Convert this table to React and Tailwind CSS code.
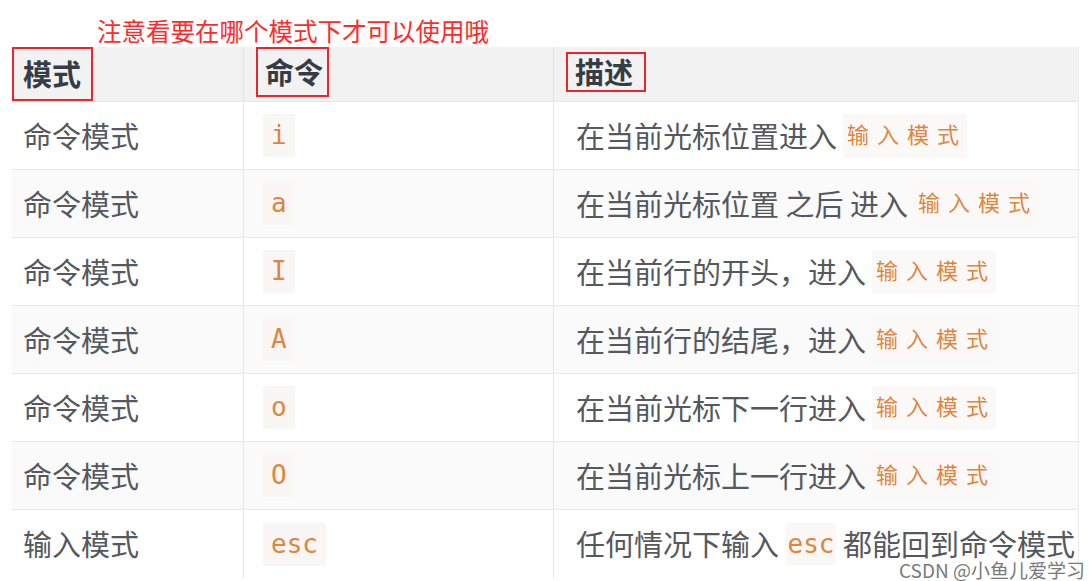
const rows = [
  { mode: "命令模式", cmd: "i", desc: [["t", "在当前光标位置进入"], ["c", "输入模式"]] },
  { mode: "命令模式", cmd: "a", desc: [["t", "在当前光标位置 之后 进入"], ["c", "输入模式"]] },
  { mode: "命令模式", cmd: "I", desc: [["t", "在当前行的开头，进入"], ["c", "输入模式"]] },
  { mode: "命令模式", cmd: "A", desc: [["t", "在当前行的结尾，进入"], ["c", "输入模式"]] },
  { mode: "命令模式", cmd: "o", desc: [["t", "在当前光标下一行进入"], ["c", "输入模式"]] },
  { mode: "命令模式", cmd: "O", desc: [["t", "在当前光标上一行进入"], ["c", "输入模式"]] },
  { mode: "输入模式", cmd: "esc", desc: [["t", "任何情况下输入 "], ["e", "esc"], ["t", " 都能回到命令模式"]] },
];

const cjk = "font-['Noto_Sans_CJK_SC',sans-serif]";
const mono = "font-['DejaVu_Sans_Mono','Noto_Sans_CJK_SC',monospace]";

const Desc = ({ parts }) => (
  <span className="flex items-center whitespace-pre">
    {parts.map(([kind, text], i) => {
      if (kind === "t") return <span key={i}>{text}</span>;
      if (kind === "e")
        return (
          <span key={i} className={`${mono} text-[26px] text-[#e0853f] bg-[#faf8f7] px-[2px] leading-[42px]`}>
            {text}
          </span>
        );
      return (
        <span
          key={i}
          className={`${mono} ml-[6px] text-[22px] tracking-[8px] text-[#e0853f] bg-[#faf9f8] pl-[4px] leading-[44px]`}
        >
          {text}
        </span>
      );
    })}
  </span>
);

export default function App() {
  return (
    <div className={`relative w-[1091px] h-[581px] bg-white overflow-hidden ${cjk}`}>
      <div className="h-[47px] pl-[97px] pt-[17px] text-[24.5px] leading-[28px] text-[#ff2a2a]">
        注意看要在哪个模式下才可以使用哦
      </div>

      <div className="ml-[12px] w-[1067px] border-r border-[#ececec]">
        <div className="grid grid-cols-[231px_310px_526px] h-[55px] bg-[#f2f2f2] border-b border-[#e6e6e6] text-[29px] font-bold text-[#353c46]">
          <div className="flex items-start">
            <span className="flex items-center h-[54px] w-[81px] pl-[9px] border-2 border-[#e8262b]">模式</span>
          </div>
          <div className="flex items-start pl-[12px] border-l border-[#e2e2e2]">
            <span className="flex items-center h-[50px] w-[73px] pl-[7px] border-2 border-[#e8262b]">命令</span>
          </div>
          <div className="flex items-start pt-[5px] pl-[12px] border-l border-[#e2e2e2]">
            <span className="flex items-center h-[40px] w-[80px] pl-[7px] border-2 border-[#e8262b]">描述</span>
          </div>
        </div>

        {rows.map((r, i) => (
          <div
            key={i}
            className={`grid grid-cols-[231px_310px_526px] h-[68px] text-[29px] text-[#55585d] ${
              i % 2 === 1 ? "bg-[#fafafa]" : "bg-white"
            } ${i < rows.length - 1 ? "border-b border-[#e8e8e8]" : ""}`}
          >
            <div className="flex items-center pl-[11px]">{r.mode}</div>
            <div className="flex items-center pl-[19px] border-l border-[#e6e6e6]">
              <span className={`${mono} text-[26px] text-[#e0853f] bg-[#f8f7f6] px-[8px] leading-[43px]`}>
                {r.cmd}
              </span>
            </div>
            <div className="flex items-center pl-[22px] border-l border-[#e6e6e6]">
              <Desc parts={r.desc} />
            </div>
          </div>
        ))}
      </div>

      <div className="absolute right-[6px] bottom-0 text-[19px] leading-[22px] text-[#7a7a7a]">
        CSDN @小鱼儿爱学习
      </div>
    </div>
  );
}
